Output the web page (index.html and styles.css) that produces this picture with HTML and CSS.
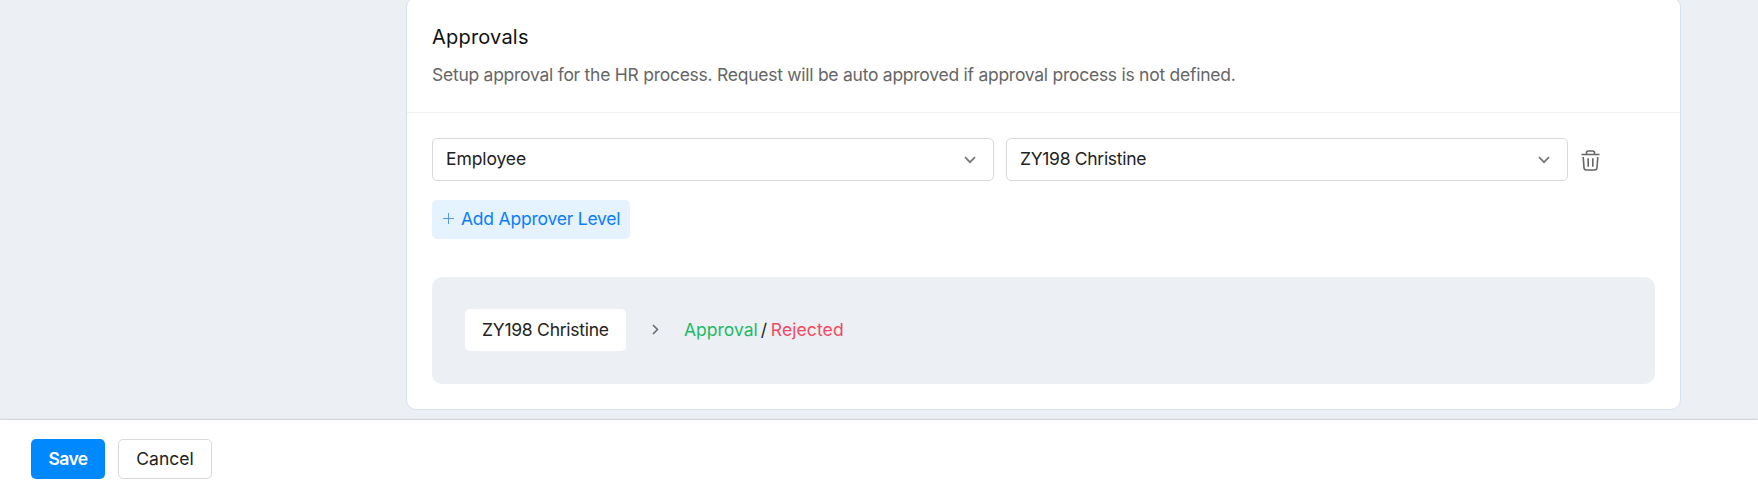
FILE: index.html
```html
<!DOCTYPE html>
<html lang="en">
<head>
    <meta charset="UTF-8">
    <meta name="viewport" content="width=device-width, initial-scale=1.0">
    <title>Approvals</title>
    <link rel="stylesheet" href="styles.css">
</head>
<body>
    <main class="content">
        <section class="card">
            <div class="card-header">
                <h2>Approvals</h2>
                <p>Setup approval for the HR process. Request will be auto approved if approval process is not defined.</p>
            </div>
            <div class="card-body">
                <div class="approver-row">
                    <div class="select">
                        <span class="role">Employee</span>
                        <svg class="arrow" width="12" height="8" viewBox="0 0 12 8"><path d="M1 1.2l5 5 5-5"/></svg>
                    </div>
                    <div class="select">
                        <span>ZY198 Christine</span>
                        <svg class="arrow" width="12" height="8" viewBox="0 0 12 8"><path d="M1 1.2l5 5 5-5"/></svg>
                    </div>
                    <svg class="trash" width="19" height="21" viewBox="0 0 19 21">
                        <path d="M.5 4.5h18M5.5 4.3V2.8q0-1.800 1.800-1.800h4.400q1.800 0 1.800 1.800v1.500M2.200 7l.8 10.800q.2 2.200 2.200 2.200h8.600q2 0 2.200-2.200L16.800 7M7.200 8.200v8.600M11.800 8.200v8.600"/>
                    </svg>
                </div>
                <button class="add-btn">
                    <svg width="11" height="11" viewBox="0 0 11 11"><path d="M5.5 0v11M0 5.5h11"/></svg>
                    <span>Add Approver Level</span>
                </button>
                <div class="flow">
                    <span class="chip">ZY198 Christine</span>
                    <svg class="next" width="7" height="11" viewBox="0 0 7 11"><path d="M1 1l4.5 4.5L1 10"/></svg>
                    <p class="result"><span class="approved">Approval</span><span class="slash">/</span><span class="rejected">Rejected</span></p>
                </div>
            </div>
        </section>
    </main>
    <footer class="actions">
        <button class="save-btn">Save</button>
        <button class="cancel-btn">Cancel</button>
    </footer>
</body>
</html>
```
FILE: styles.css
```css
* {
    box-sizing: border-box;
}

body {
    margin: 0;
    height: 482px;
    overflow: hidden;
    display: flex;
    flex-direction: column;
    font-family: Inter, "Liberation Sans", sans-serif;
    font-size: 17.5px;
    line-height: 24px;
    letter-spacing: -0.3px;
    color: #222;
    background-color: #ecf0f5;
}

button {
    font: inherit;
    letter-spacing: inherit;
    border: none;
    border-radius: 5px;
    padding: 0;
    cursor: pointer;
}

svg {
    display: block;
    flex: none;
    fill: none;
    stroke: #666;
}

.content {
    height: 420px;
    flex: none;
    padding-left: 406px;
}

.card {
    width: 1275px;
    height: 413px;
    margin-top: -3px;
    background-color: #fff;
    border: 1px solid #d7e1ee;
    border-radius: 10px;
}

.card-header {
    height: 115px;
    padding: 26px 25px 0;
    border-bottom: 1px solid #f1f1f1;
}

h2 {
    margin: 0;
    font-size: 20px;
    font-weight: 400;
    line-height: 26px;
    letter-spacing: 0.2px;
    color: #111;
}

.card-header p {
    margin: 13px 0 0;
    color: #666;
    letter-spacing: -0.26px;
}

.card-body {
    padding: 25px 25px 0;
}

.approver-row {
    display: flex;
    align-items: center;
    gap: 12px;
}

.select {
    width: 562px;
    height: 43px;
    padding: 0 17px 2px 13px;
    display: flex;
    align-items: center;
    justify-content: space-between;
    border: 1px solid #d9d9d9;
    border-radius: 5px;
}

.role {
    letter-spacing: -0.1px;
}

.arrow {
    margin-top: 3px;
    stroke: #777;
    stroke-width: 1.7;
}

.trash {
    margin-top: 1px;
    margin-left: 1px;
    stroke-width: 1.6;
}

.add-btn {
    display: flex;
    align-items: center;
    width: 198px;
    height: 39px;
    margin-top: 19px;
    padding: 0 0 2px 11px;
    gap: 7px;
    color: #0b7dfa;
    background-color: #e5f2ff;
    letter-spacing: -0.22px;
}

.add-btn svg {
    stroke: #5598f5;
}

.flow {
    display: flex;
    align-items: center;
    height: 107px;
    margin-top: 38px;
    padding: 0 0 2px 33px;
    background-color: #ecf0f5;
    border-radius: 10px;
}

.chip {
    width: 161px;
    height: 42px;
    padding-left: 17px;
    line-height: 42px;
    letter-spacing: -0.25px;
    background-color: #fff;
    border-radius: 5px;
}

.next {
    margin-left: 26px;
    stroke-width: 1.5;
}

.result {
    margin: 0 0 0 25px;
    display: flex;
}

.slash {
    margin: 0 4px 0 3px;
}

.approved {
    color: #1eb866;
    letter-spacing: 0;
}

.rejected {
    color: #f04b5f;
    letter-spacing: 0.1px;
}

.actions {
    flex: 1;
    display: flex;
    gap: 13px;
    padding: 19px 31px 0;
    background-color: #fff;
    box-shadow: 0 0 2px rgba(0, 0, 0, 0.35);
}

.save-btn {
    width: 74px;
    height: 40px;
    font-weight: 600;
    letter-spacing: -0.6px;
    color: #fff;
    background-color: #0088ff;
}

.cancel-btn {
    width: 94px;
    height: 40px;
    color: #222;
    letter-spacing: 0;
    background-color: #fff;
    border: 1px solid #d9d9d9;
}
```
